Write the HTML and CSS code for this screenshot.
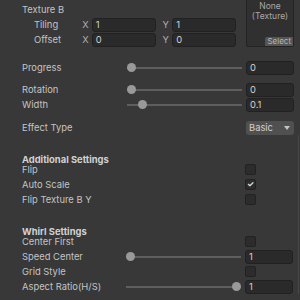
FILE: index.html
```html
<!DOCTYPE html>
<html lang="en">
<head>
  <meta charset="UTF-8">
  <title>Inspector</title>
  <link rel="stylesheet" href="styles.css">
</head>
<body>
  <div class="inspector">

    <div class="tex-block">
      <div class="tex-fields">
        <div class="row">Texture B</div>
        <div class="row vec">
          <span class="sub">Tiling</span>
          <span class="axis">X</span><span class="field wide">1</span>
          <span class="axis">Y</span><span class="field wide">1</span>
        </div>
        <div class="row vec">
          <span class="sub">Offset</span>
          <span class="axis">X</span><span class="field wide">0</span>
          <span class="axis">Y</span><span class="field wide">0</span>
        </div>
      </div>
      <div class="tex-slot">
        <div class="slot-text">None<br>(Texture)</div>
        <span class="select-btn">Select</span>
      </div>
    </div>

    <div class="row gap-progress">
      <span class="label">Progress</span>
      <div class="slider"><span class="thumb" style="--v: 0"></span></div>
      <span class="field">0</span>
    </div>
    <div class="row gap-rotation">
      <span class="label">Rotation</span>
      <div class="slider"><span class="thumb" style="--v: 0"></span></div>
      <span class="field">0</span>
    </div>
    <div class="row">
      <span class="label">Width</span>
      <div class="slider"><span class="thumb" style="--v: 0.1"></span></div>
      <span class="field">0.1</span>
    </div>
    <div class="row gap-effect">
      <span class="label">Effect Type</span>
      <span class="dropdown">Basic <span class="caret"></span></span>
    </div>

    <div class="lower">
      <div class="section-head">Additional Settings</div>
      <div class="row">
        <span class="label">Flip</span>
        <span class="cell"><span class="check"></span></span>
      </div>
      <div class="row">
        <span class="label">Auto Scale</span>
        <span class="cell"><span class="check">&#10003;</span></span>
      </div>
      <div class="row">
        <span class="label">Flip Texture B Y</span>
        <span class="cell"><span class="check"></span></span>
      </div>

      <div class="section-head">Whirl Settings</div>
      <div class="row">
        <span class="label">Center First</span>
        <span class="cell"><span class="check"></span></span>
      </div>
      <div class="row">
        <span class="label">Speed Center</span>
        <div class="slider"><span class="thumb" style="--v: 0"></span></div>
        <span class="field">1</span>
      </div>
      <div class="row">
        <span class="label">Grid Style</span>
        <span class="cell"><span class="check"></span></span>
      </div>
      <div class="row">
        <span class="label">Aspect Ratio(H/S)</span>
        <div class="slider"><span class="thumb" style="--v: 1"></span></div>
        <span class="field">1</span>
      </div>
    </div>

  </div>
</body>
</html>
```

FILE: styles.css
```css
body {
  margin: 0;
  background-color: #383838;
  color: #c4c4c4;
  font-family: Inter, "Liberation Sans", sans-serif;
  font-size: 9.4px;
  overflow: hidden;
}

.inspector {
  padding: 2px 6px 0 22px;
}

.row {
  display: flex;
  align-items: center;
  height: 15px;
  white-space: nowrap;
}

.label {
  flex: 1;
}

/* texture property */
.tex-block {
  display: flex;
  align-items: flex-start;
}

.tex-fields {
  width: 221px;
}

.vec .sub {
  width: 50px;
  padding-left: 12px;
}

.axis {
  width: 10px;
  color: #b0b0b0;
}

.field.wide {
  width: 66px;
  margin-right: 7px;
}

.tex-slot {
  box-sizing: border-box;
  width: 48px;
  height: 58px;
  margin: -13px 0 0 3px;
  background-color: #303030;
  border: 1px solid #232323;
  border-radius: 2px;
  display: flex;
  flex-direction: column;
  align-items: flex-end;
  justify-content: space-between;
}

.slot-text {
  align-self: stretch;
  text-align: center;
  color: #a8a8a8;
  font-size: 8.5px;
  line-height: 10px;
  padding-top: 11px;
}

.select-btn {
  background-color: #555;
  color: #b8b8b8;
  font-size: 8px;
  line-height: 9px;
  padding: 0 2px;
  border-radius: 2px 0 0 0;
}

/* fields */
.field {
  box-sizing: border-box;
  width: 48px;
  height: 14px;
  line-height: 12px;
  padding-left: 3px;
  background-color: #2a2a2a;
  border: 1px solid #212121;
  border-radius: 3px;
  color: #d2d2d2;
}

.slider {
  position: relative;
  width: 115px;
  height: 2px;
  margin-right: 4px;
  background-color: #5e5e5e;
}

.thumb {
  position: absolute;
  top: -4px;
  left: calc(var(--v) * 106px);
  width: 9px;
  height: 9px;
  border-radius: 50%;
  background-color: #999;
}

.dropdown {
  box-sizing: border-box;
  width: 48px;
  height: 14px;
  line-height: 14px;
  padding: 0 4px 0 3px;
  background-color: #505050;
  border-radius: 3px;
  color: #d0d0d0;
  display: flex;
  justify-content: space-between;
  align-items: center;
}

.caret {
  width: 0;
  height: 0;
  border-left: 3px solid transparent;
  border-right: 3px solid transparent;
  border-top: 4px solid #c4c4c4;
}

.cell {
  width: 48px;
  display: flex;
}

.check {
  box-sizing: border-box;
  width: 11px;
  height: 11px;
  background-color: #2c2c2c;
  border: 1px solid #222;
  border-radius: 2px;
  color: #e6e6e6;
  font-size: 8px;
  line-height: 9px;
  text-align: center;
  font-weight: bold;
}

.gap-progress {
  margin-top: 13px;
}

.gap-rotation {
  margin-top: 7px;
}

.gap-effect {
  margin-top: 8px;
}

.lower {
  margin-right: -5px;
  padding-right: 5px;
  padding-top: 17px;
  border-right: 1px solid #474747;
}

.section-head {
  height: 15px;
  line-height: 15px;
  margin-bottom: -5px;
  font-weight: bold;
  color: #d2d2d2;
}

.row + .section-head {
  margin-top: 17px;
}
```
